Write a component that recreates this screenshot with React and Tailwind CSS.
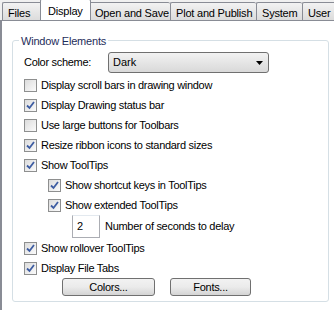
import React from 'react';

const font = { fontFamily: '"Liberation Sans", Arial, sans-serif' };

const Tab = ({ label, active, w }) =>
  active ? (
    <div
      className={`relative z-10 -mx-[2px] h-[21px] ${w} shrink-0 border border-b-0 border-[#898c95] bg-white rounded-t-[2px] pl-[7px] pt-[3px] text-[11px] tracking-[-0.2px] text-black`}
    >
      {label}
    </div>
  ) : (
    <div
      className={`h-[18px] ${w} shrink-0 border border-r-0 border-b-0 border-[#898c95] bg-gradient-to-b from-[#f2f2f2] to-[#dcdcdc] rounded-t-[2px] pl-[5px] pt-[2px] text-[11px] tracking-[-0.2px] text-black`}
    >
      {label}
    </div>
  );

const Check = ({ checked, label, indent }) => (
  <div className={`flex h-[20px] items-center gap-[4px] ${indent ? 'pl-[24px]' : ''}`}>
    <div className="flex h-[13px] w-[13px] items-center justify-center border border-[#8e8f8f] bg-gradient-to-br from-[#dcdcdc] to-[#fbfbfb]">
      {checked && (
        <svg width="9" height="9" viewBox="0 0 9 9">
          <path d="M1 4.5 L3.5 7 L8 1" fill="none" stroke="#3e5da2" strokeWidth="1.8" />
        </svg>
      )}
    </div>
    <span className="text-[11px] tracking-[-0.3px] text-black">{label}</span>
  </div>
);

const Button = ({ label, w }) => (
  <div
    className={`flex h-[18px] ${w} items-center justify-center rounded-[3px] border border-[#707070] bg-gradient-to-b from-[#f2f2f2] via-[#ebebeb] to-[#d4d4d4] text-[11px] tracking-[-0.3px] text-black`}
  >
    {label}
  </div>
);

export default function App() {
  return (
    <div className="h-[310px] w-[334px] overflow-hidden bg-[#f0f0f0]" style={font}>
      {/* Tab strip */}
      <div className="flex h-[20px] items-end overflow-hidden whitespace-nowrap pl-[2px]">
        <Tab label="Files" w="w-[40px]" />
        <Tab label="Display" active w="w-[51px]" />
        <Tab label="Open and Save" w="w-[81px]" />
        <Tab label="Plot and Publish" w="w-[86px]" />
        <Tab label="System" w="w-[46px]" />
        <Tab label="User" w="w-[40px]" />
      </div>

      {/* Page */}
      <div className="h-[290px] border-l-2 border-t border-[#898c95] bg-white pl-[10px] pt-[19px]">
        <div className="relative h-[262px] w-[317px] rounded-[3px] border border-[#d5dfe5] px-[11px] pt-[11px]">
          <div className="absolute -top-[8px] left-[6px] bg-white px-[2px] text-[11px] tracking-[-0.2px] text-[#1e2d5a]">
            Window Elements
          </div>

          <div className="flex h-[21px] items-center">
            <span className="w-[84px] text-[11px] tracking-[-0.3px] text-black">Color scheme:</span>
            <div className="flex h-[21px] w-[161px] items-center justify-between rounded-[3px] border border-[#707070] bg-gradient-to-b from-[#f2f2f2] to-[#d9d9d9] pl-[4px] pr-[5px] text-[11px] text-black">
              <span>Dark</span>
              <svg width="7" height="4" viewBox="0 0 7 4">
                <path d="M0 0 H7 L3.5 4 Z" fill="#000" />
              </svg>
            </div>
          </div>

          <div className="mt-[2px]">
            <Check label="Display scroll bars in drawing window" />
            <Check checked label="Display Drawing status bar" />
            <Check label="Use large buttons for Toolbars" />
            <Check checked label="Resize ribbon icons to standard sizes" />
            <Check checked label="Show ToolTips" />
            <Check checked indent label="Show shortcut keys in ToolTips" />
            <Check checked indent label="Show extended ToolTips" />
            <div className="flex h-[23px] items-center gap-[5px] pl-[48px]">
              <div className="flex h-[23px] w-[28px] items-center border border-[#abadb3] border-t-[#e3e9ef] bg-white pl-[4px] text-[11px] text-black">
                2
              </div>
              <span className="text-[11px] tracking-[-0.3px] text-black">Number of seconds to delay</span>
            </div>
            <Check checked label="Show rollover ToolTips" />
            <Check checked label="Display File Tabs" />
          </div>

          <div className="flex gap-[15px] pl-[38px]">
            <Button label="Colors..." w="w-[93px]" />
            <Button label="Fonts..." w="w-[81px]" />
          </div>
        </div>
      </div>
    </div>
  );
}
